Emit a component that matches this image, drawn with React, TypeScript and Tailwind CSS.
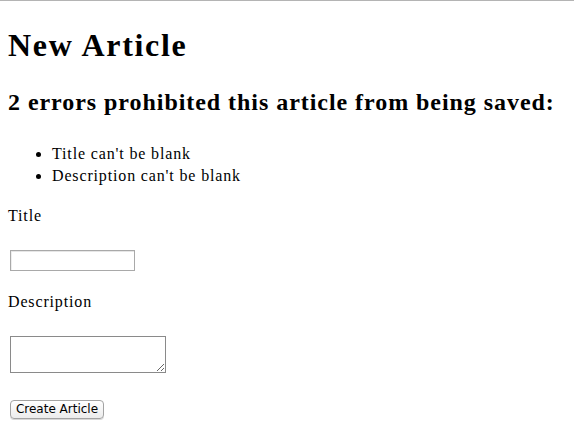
import React from "react";

export default function App() {
  return (
    <div className="min-h-[428px] w-[574px] border-t border-[#b4b4b4] bg-white px-[8px] text-black font-['Liberation_Serif',serif]">
      <h1 className="mt-[26px] text-[32px] font-bold leading-[36px] tracking-[1.7px]">New Article</h1>
      <div>
        <h2 className="mt-[25px] text-[24px] font-bold leading-[28px] tracking-[0.95px]">
          2 errors prohibited this article from being saved:
        </h2>
        <ul className="mt-[27px] list-disc pl-[44px] text-[16px] leading-[22px] tracking-[0.85px]">
          <li>Title can't be blank</li>
          <li>Description can't be blank</li>
        </ul>
      </div>
      <div className="mt-[18px] text-[16px] leading-[22px] tracking-[0.85px]">
        <label htmlFor="title">Title</label>
      </div>
      <div className="mt-[23px] pl-[2px]">
        <input
          id="title"
          type="text"
          className="block h-[21px] w-[125px] border border-[#a9a9a9] bg-white shadow-[inset_0_1px_0_#e6e6e6,inset_1px_0_0_#eeeeee] outline-none"
        />
      </div>
      <div className="mt-[20px] text-[16px] leading-[22px] tracking-[0.85px]">
        <label htmlFor="desc">Description</label>
      </div>
      <div className="mt-[23px] pl-[2px]">
        <textarea
          id="desc"
          className="block h-[37px] w-[156px] border border-[#8a8a8a] bg-white outline-none"
        />
      </div>
      <div className="mt-[27px] pl-[2px]">
        <button
          type="button"
          className="block h-[19px] w-[94px] rounded-[4px] border border-[#a3a3a3] bg-gradient-to-b from-white to-[#ececec] text-center text-[12px] leading-[17px] text-black font-['DejaVu_Sans',sans-serif] shadow-[0_1px_0_#d8d8d8]"
        >
          Create Article
        </button>
      </div>
    </div>
  );
}
